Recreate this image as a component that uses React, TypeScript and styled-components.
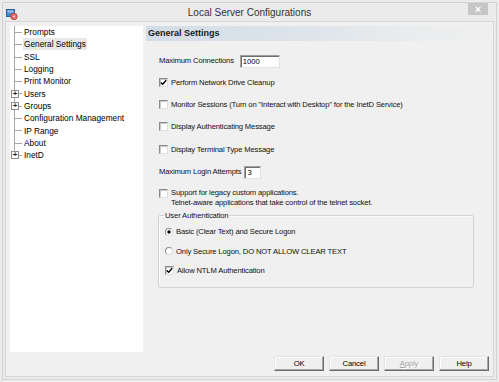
import React from "react";
import styled, { createGlobalStyle } from "styled-components";

const GlobalStyle = createGlobalStyle`
  html, body {
    margin: 0;
    padding: 0;
    background: #ececec;
  }
  body {
    font-family: "Liberation Sans", Arial, sans-serif;
    color: #000;
  }
  * {
    box-sizing: border-box;
  }
`;

type TreeItem = { label: string; expandable?: boolean; selected?: boolean };

const treeItems: TreeItem[] = [
  { label: "Prompts" },
  { label: "General Settings", selected: true },
  { label: "SSL" },
  { label: "Logging" },
  { label: "Print Monitor" },
  { label: "Users", expandable: true },
  { label: "Groups", expandable: true },
  { label: "Configuration Management" },
  { label: "IP Range" },
  { label: "About" },
  { label: "InetD", expandable: true },
];

const CheckMark = () => (
  <svg width="7" height="7" viewBox="0 0 7 7">
    <path d="M0.8 3.4 L2.7 5.3 L6.2 1.2" fill="none" stroke="#000" strokeWidth="1.4" />
  </svg>
);

const AppIcon = () => (
  <svg width="12" height="11" viewBox="0 0 12 11">
    <rect x="0.5" y="0.5" width="8" height="7" fill="#4a86c5" stroke="#2b5f96" />
    <rect x="1.5" y="1.5" width="6" height="2" fill="#9cc8ee" />
    <circle cx="8" cy="7.5" r="3.2" fill="#e26a6a" stroke="#b83c3c" strokeWidth="0.8" />
    <circle cx="8" cy="7.5" r="1.1" fill="#f6d0d0" />
  </svg>
);

const CheckRow: React.FC<{ checked?: boolean; h: number; children: React.ReactNode }> = ({
  checked,
  h,
  children,
}) => (
  <Row $h={h}>
    <Check>{checked ? <CheckMark /> : null}</Check>
    <Label>{children}</Label>
  </Row>
);

const RadioRow: React.FC<{ checked?: boolean; h: number; children: React.ReactNode }> = ({
  checked,
  h,
  children,
}) => (
  <Row $h={h}>
    <Radio $on={!!checked} />
    <Label>{children}</Label>
  </Row>
);

export default function App() {
  return (
    <Screen>
      <GlobalStyle />
      <Window>
        <TitleBar>
          <IconSlot>
            <AppIcon />
          </IconSlot>
          <Title>Local Server Configurations</Title>
          <CloseButton>×</CloseButton>
        </TitleBar>
        <Frame>
          <Main>
            <Tree>
              {treeItems.map((item, i) => (
                <TreeRow key={item.label} $last={i === treeItems.length - 1}>
                  {item.expandable ? <Expander>+</Expander> : null}
                  <TreeText $selected={!!item.selected}>{item.label}</TreeText>
                </TreeRow>
              ))}
            </Tree>
            <Panel>
              <PanelHeader>General Settings</PanelHeader>
              <PanelBody>
                <Row $h={22}>
                  <Label>Maximum Connections</Label>
                  <Field readOnly value="1000" $w={40} $gap={6} />
                </Row>
                <CheckRow checked h={22}>
                  Perform Network Drive Cleanup
                </CheckRow>
                <CheckRow h={22}>
                  Monitor Sessions (Turn on "Interact with Desktop" for the InetD Service)
                </CheckRow>
                <CheckRow h={23}>Display Authenticating Message</CheckRow>
                <CheckRow h={22}>Display Terminal Type Message</CheckRow>
                <Row $h={22}>
                  <Label>Maximum Login Attempts</Label>
                  <Field readOnly value="3" $w={17} $gap={3} />
                </Row>
                <MultiRow>
                  <Check>{null}</Check>
                  <Label>
                    Support for legacy custom applications.
                    <br />
                    Telnet-aware applications that take control of the telnet socket.
                  </Label>
                </MultiRow>
                <Group>
                  <Legend>User Authentication</Legend>
                  <RadioRow checked h={19.5}>
                    Basic (Clear Text) and Secure Logon
                  </RadioRow>
                  <RadioRow h={19.5}>Only Secure Logon, DO NOT ALLOW CLEAR TEXT</RadioRow>
                  <CheckRow checked h={19.5}>
                    Allow NTLM Authentication
                  </CheckRow>
                </Group>
              </PanelBody>
            </Panel>
          </Main>
          <ButtonBar>
            <Button>OK</Button>
            <Button>Cancel</Button>
            <Button disabled>
              <u>A</u>pply
            </Button>
            <Button>Help</Button>
          </ButtonBar>
        </Frame>
      </Window>
    </Screen>
  );
}

const Screen = styled.div`
  width: 499px;
  height: 382px;
  padding: 2px;
  background: #ececec;
`;

const Window = styled.div`
  height: 100%;
  display: flex;
  flex-direction: column;
  border: 1px solid #d2d2d2;
  background: #ebebeb;
`;

const TitleBar = styled.div`
  height: 18px;
  flex: none;
  display: grid;
  grid-template-columns: 40px 1fr 40px;
  align-items: center;
`;

const IconSlot = styled.div`
  display: flex;
  padding-left: 3px;
  margin-top: 3px;
`;

const Title = styled.div`
  text-align: center;
  font-size: 10px;
  color: #333;
  line-height: 18px;
  padding-top: 1px;
`;

const CloseButton = styled.div`
  justify-self: end;
  align-self: start;
  margin-right: 8px;
  width: 20px;
  height: 12px;
  background: #c6c6c6;
  color: #fff;
  font-size: 11px;
  line-height: 12px;
  text-align: center;
  font-weight: bold;
`;

const Frame = styled.div`
  flex: 1;
  margin: 0 2px 2px;
  border: 1px solid #d6d6d6;
  background: #f0f0f0;
  padding: 4px 3px 5px 4px;
  display: flex;
  flex-direction: column;
`;

const Main = styled.div`
  height: 326px;
  display: flex;
  gap: 3px;
`;

const Tree = styled.div`
  width: 133px;
  flex: none;
  background: #fff;
  padding-top: 0;
`;

const TreeRow = styled.div<{ $last: boolean }>`
  position: relative;
  height: 12.3px;
  padding-left: 13px;
  display: flex;
  align-items: center;

  &::before {
    content: "";
    position: absolute;
    left: 4px;
    top: ${(p) => (p.$last ? "-1px" : "0")};
    height: ${(p) => (p.$last ? "7px" : "100%")};
    border-left: 1px solid #a8a8a8;
  }

  &::after {
    content: "";
    position: absolute;
    left: 5px;
    top: 6px;
    width: 7px;
    border-top: 1px solid #a8a8a8;
  }
`;

const Expander = styled.span`
  position: absolute;
  z-index: 1;
  left: 1px;
  top: 2.5px;
  width: 8px;
  height: 8px;
  border: 1px solid #8f8f8f;
  background: #fff;
  font-size: 8px;
  line-height: 6px;
  text-align: center;
  color: #222;
  font-weight: bold;
`;

const TreeText = styled.span<{ $selected: boolean }>`
  font-size: 8.3px;
  line-height: 12px;
  padding: 0 1px;
  background: ${(p) => (p.$selected ? "#e8e8e8" : "transparent")};
  white-space: nowrap;
`;

const Panel = styled.div`
  flex: 1;
  display: flex;
  flex-direction: column;
`;

const PanelHeader = styled.div`
  height: 15px;
  flex: none;
  padding-left: 2px;
  font-size: 9px;
  font-weight: bold;
  line-height: 15px;
  color: #1a1a1a;
  background: linear-gradient(to right, #d3dde7 0%, #dde4ea 45%, #e9ecee 75%, #efefef 100%);
`;

const PanelBody = styled.div`
  padding: 8px 0 0 13px;
  display: flex;
  flex-direction: column;
  font-size: 7.65px;
`;

const Row = styled.div<{ $h: number }>`
  height: ${(p) => p.$h}px;
  display: flex;
  align-items: center;
`;

const MultiRow = styled.div`
  margin-top: 6px;
  display: flex;
  align-items: flex-start;
  line-height: 10px;

  & > span:first-child {
    margin-top: 1px;
  }
`;

const Label = styled.span`
  font-size: 7.65px;
  letter-spacing: -0.15px;
  white-space: nowrap;
  color: #111;
`;

const Field = styled.input<{ $w: number; $gap: number }>`
  width: ${(p) => p.$w}px;
  height: 13px;
  margin: 2px 0 0 ${(p) => p.$gap}px;
  padding: 0 2px;
  border: 1px solid;
  border-color: #a0a0a0 #e2e2e2 #e2e2e2 #a0a0a0;
  box-shadow: inset 1px 1px 0 #6e6e6e;
  background: #fff;
  font-family: "Liberation Sans", Arial, sans-serif;
  font-size: 7.65px;
  color: #000;
  outline: none;
`;

const Check = styled.span`
  flex: none;
  width: 9px;
  height: 9px;
  margin-right: 3px;
  background: #fff;
  border: 1px solid;
  border-color: #8a8a8a #dedede #dedede #8a8a8a;
  box-shadow: inset 1px 1px 0 #c9c9c9;
  display: inline-flex;
  align-items: center;
  justify-content: center;
`;

const Radio = styled.span<{ $on: boolean }>`
  flex: none;
  width: 8px;
  height: 8px;
  margin-right: 3px;
  border-radius: 50%;
  border: 1px solid;
  border-color: #8a8a8a #dcdcdc #dcdcdc #8a8a8a;
  background: ${(p) =>
    p.$on ? "radial-gradient(circle, #000 0 1.4px, #fff 1.8px)" : "#fff"};
`;

const Group = styled.fieldset`
  width: 316px;
  margin: 2px 0 0 -1px;
  padding: 1px 6px 6px;
  min-width: 0;
  border: 1px solid #d2d2d2;
  border-radius: 2px;
  box-shadow: inset 1px 1px 0 #fafafa;
`;

const Legend = styled.legend`
  padding: 0 1px;
  margin-left: -1px;
  font-size: 7.65px;
  line-height: 11px;
  letter-spacing: -0.15px;
  color: #111;
`;

const ButtonBar = styled.div`
  margin-top: 4px;
  height: 15px;
  display: flex;
  justify-content: flex-end;
  gap: 5px;
  padding-right: 1px;
`;

const Button = styled.button`
  width: 50px;
  height: 15px;
  padding: 0;
  background: #efefef;
  border: 1px solid;
  border-color: #e4e4e4 #6c6c6c #6c6c6c #e4e4e4;
  box-shadow: inset -1px -1px 0 #a8a8a8, inset 1px 1px 0 #fff;
  font-family: "Liberation Sans", Arial, sans-serif;
  font-size: 7.65px;
  letter-spacing: -0.15px;
  color: #000;

  &:disabled {
    color: #a2a2a2;
    text-shadow: 1px 1px 0 #fff;
  }
`;
